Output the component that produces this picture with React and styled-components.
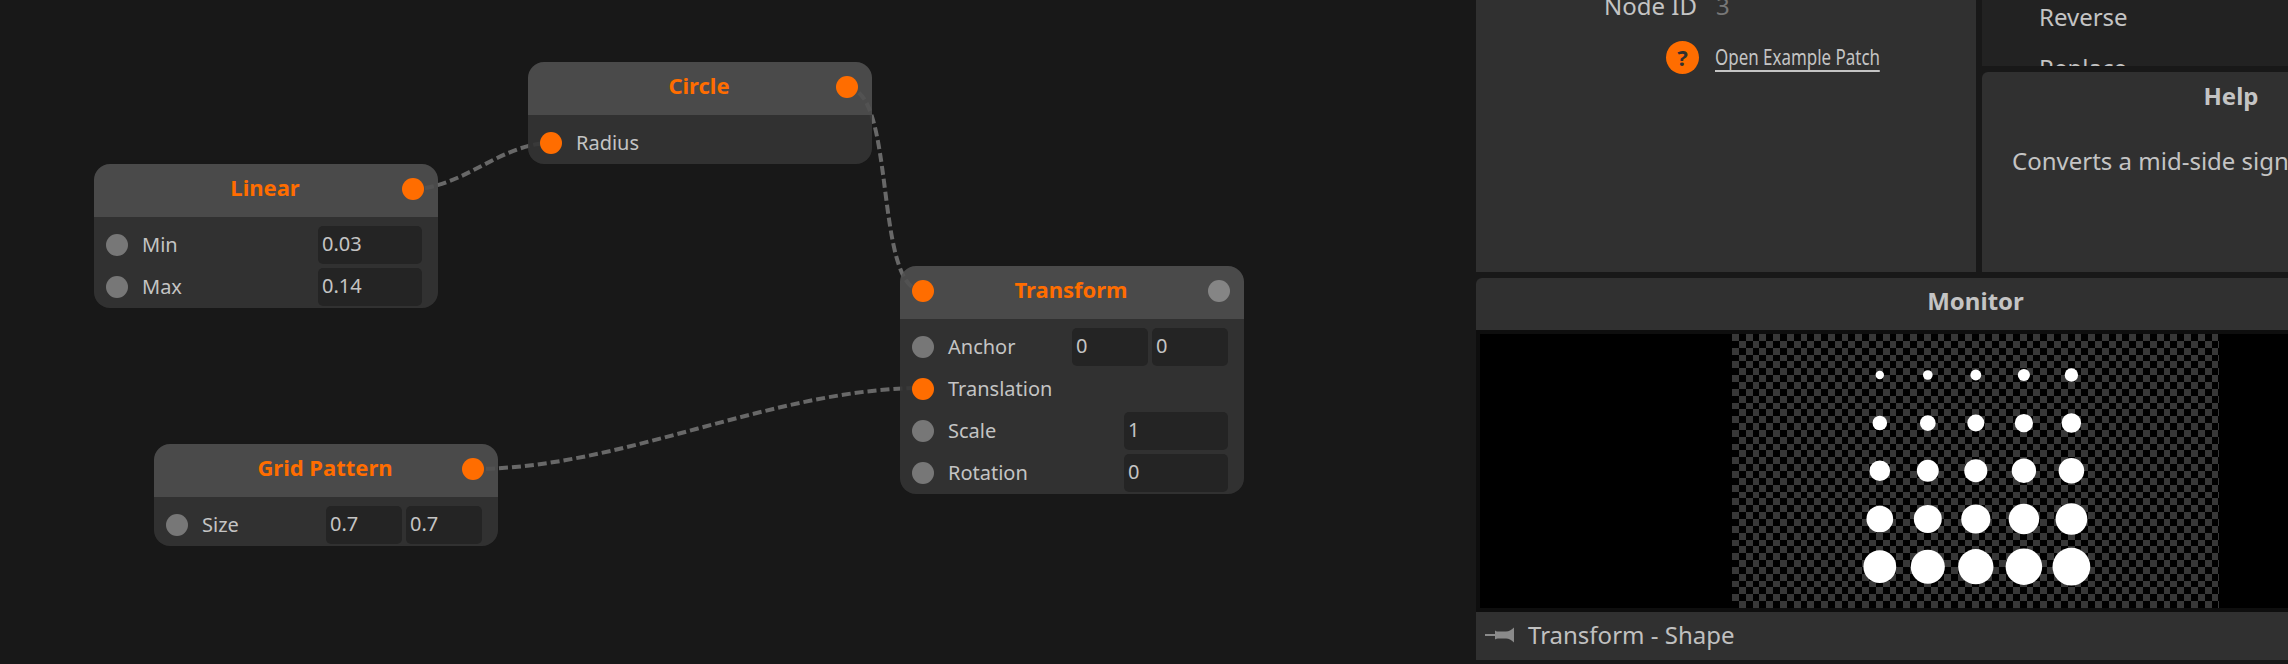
import React from "react"
import styled, { createGlobalStyle } from "styled-components"

const GlobalStyle = createGlobalStyle`
  html, body {
    margin: 0;
    padding: 0;
    background: #181818;
    font-family: "Noto Sans", "Open Sans", sans-serif;
    overflow: hidden;
  }
`

const Screen = styled.div`
  display: flex;
  width: 2288px;
  height: 664px;
  overflow: hidden;
  background: #181818;
`

const Canvas = styled.section`
  position: relative;
  flex: 0 0 1476px;
  height: 664px;
  overflow: hidden;
`

const WireLayer = styled.svg`
  position: absolute;
  inset: 0;
  pointer-events: none;
`

const Wire = styled.path`
  fill: none;
  stroke: #686868;
  stroke-width: 4;
  stroke-dasharray: 9 4;
`

const NodeCard = styled.div`
  position: absolute;
  left: ${(p) => p.$x}px;
  top: ${(p) => p.$y}px;
  width: 344px;
`

const NodeHeader = styled.header`
  display: grid;
  grid-template-columns: 1fr auto 1fr;
  align-items: center;
  box-sizing: border-box;
  height: 53px;
  padding: 0 14px 3px 12px;
  border-radius: 16px 16px 0 0;
  background: rgba(80, 80, 80, 0.9);
`

const NodeTitle = styled.h3`
  grid-column: 2;
  margin: -4px 0 0;
  font-size: 22px;
  font-weight: 700;
  color: #ff6d00;
  white-space: nowrap;
`

const Port = styled.span`
  flex: none;
  display: block;
  width: 22px;
  height: 22px;
  border-radius: 50%;
  background: ${(p) => (p.$on ? "#ff6d00" : p.$light ? "#858585" : "#777")};
`

const InPort = styled(Port)`
  grid-column: 1;
  grid-row: 1;
  justify-self: start;
`

const OutPort = styled(Port)`
  grid-column: 3;
  grid-row: 1;
  justify-self: end;
`

const NodeBody = styled.div`
  padding-top: 7px;
  border-radius: 0 0 16px 16px;
  background: rgba(52, 52, 52, 0.9);
`

const Row = styled.div`
  display: flex;
  align-items: center;
  gap: 4px;
  height: 42px;
  padding: 0 16px 0 12px;
`

const Label = styled.span`
  flex: 1;
  margin: -2px 0 0 10px;
  font-size: 20px;
  color: #c4c4c4;
  white-space: nowrap;
`

const Field = styled.div`
  flex: none;
  box-sizing: border-box;
  width: ${(p) => (p.$half ? 76 : 104)}px;
  height: 38px;
  padding-left: 4px;
  border-radius: 5px;
  background: #242424;
  font-size: 20px;
  line-height: 36px;
  color: #c4c4c4;
`

const Side = styled.aside`
  flex: none;
  display: grid;
  grid-template-columns: 500px 498px;
  grid-template-rows: 272px 382px;
  gap: 6px;
  width: 1004px;
  height: 664px;
`

const Panel = styled.div`
  background: #303030;
  overflow: hidden;
`

const Inspector = styled(Panel)`
  display: flex;
  flex-direction: column;
  color: #c4c4c4;
`

const InfoRow = styled.div`
  display: flex;
  align-items: center;
  gap: 19px;
  height: 40px;
  margin-top: -15px;
  padding-left: 128px;
  font-size: 24px;
`

const InfoValue = styled.span`
  color: #777;
`

const ExampleRow = styled.div`
  display: flex;
  align-items: center;
  gap: 16px;
  height: 40px;
  margin-top: 12px;
  padding-left: 190px;
`

const HelpIcon = styled.span`
  flex: none;
  width: 33px;
  height: 33px;
  border-radius: 50%;
  background: #ff6d00;
  color: #303030;
  font-size: 22px;
  font-weight: 700;
  line-height: 33px;
  text-align: center;
`

// the link is set narrower than the font's own width
const ExampleLink = styled.a`
  font-size: 22px;
  line-height: 27px;
  color: #c4c4c4;
  border-bottom: 2px solid #c4c4c4;
  white-space: nowrap;
  transform: scaleX(0.77);
  transform-origin: left center;
`

const RightStack = styled.div`
  display: flex;
  flex-direction: column;
  gap: 6px;
  height: 272px;
`

const ListPanel = styled.div`
  flex: 0 0 66px;
  overflow: hidden;
  background: #222;
`

const ListItem = styled.div`
  height: 51px;
  padding-left: 57px;
  font-size: 24px;
  line-height: 51px;
  color: #c4c4c4;

  &:first-child {
    margin-top: -9px;
  }
`

const HelpPanel = styled(Panel)`
  flex: 1;
  border-radius: 6px 6px 0 0;
`

const PanelTitle = styled.h2`
  margin: 0;
  height: 52px;
  font-size: 24px;
  font-weight: 700;
  line-height: ${(p) => p.$line || 48}px;
  text-align: center;
  color: #c4c4c4;
`

const HelpText = styled.p`
  margin: 19px 0 0;
  padding-left: 30px;
  font-size: 24px;
  line-height: 36px;
  color: #c4c4c4;
  white-space: nowrap;
`

const Monitor = styled(Panel)`
  grid-column: 1 / 3;
  display: flex;
  flex-direction: column;
  width: 999px;
  height: 382px;
  border-radius: 6px 6px 0 0;
`

const Viewport = styled.div`
  display: flex;
  justify-content: center;
  box-sizing: border-box;
  height: 282px;
  border: 4px solid #0e0e0e;
  background: #000;
`

const Preview = styled.svg`
  display: block;
  flex: none;
`

const MonitorFooter = styled.footer`
  display: flex;
  align-items: center;
  gap: 13px;
  flex: 1;
  padding: 0 0 3px 9px;
  font-size: 24px;
  color: #c0c0c0;
`

const pinPath =
  "M10 3.5C12 5 14 4.5 16 4.5H21C24 4.5 26 3 29 .5V15.5C26 13 24 11.5 21 11.5H16C14 11.5 12 11 10 12.5Z"

const PinIcon = () => (
  <svg width="30" height="16" viewBox="0 0 30 16">
    <path d="M0 8H11" stroke="#8a8a8a" strokeWidth="2" />
    <path d={pinPath} fill="#8a8a8a" />
  </svg>
)

const curve = (x1, y1, x2, y2, k) =>
  `M${x1} ${y1}C${x1 + k} ${y1} ${x2 - k} ${y2} ${x2} ${y2}`

const wires = [
  curve(412, 189, 551, 143, 50),
  curve(847, 88, 923, 291, 50),
  curve(473, 469, 923, 388, 150),
]

const cell = 6.85
const cells = []
for (let j = 0; j < 40; j++) {
  for (let i = 0; i < 72; i++) {
    if ((i + j) % 2 === 0) cells.push({ x: i * cell, y: j * cell })
  }
}

const dotXs = [147.8, 195.8, 243.8, 291.9, 339.4]
const dotYs = [41, 89, 136.7, 185, 232.7]

const dots = dotYs.flatMap((cy, row) =>
  dotXs.map((cx, col) => ({ cx, cy, r: (8.4 + 6.1 * row + 1.25 * col) / 2 }))
)

const GraphNode = ({ x, y, title, inOn, outOn, outLight, hasIn, children }) => (
  <NodeCard $x={x} $y={y}>
    <NodeHeader>
      {hasIn && <InPort $on={inOn} />}
      <NodeTitle>{title}</NodeTitle>
      <OutPort $on={outOn} $light={outLight} />
    </NodeHeader>
    <NodeBody>{children}</NodeBody>
  </NodeCard>
)

const Param = ({ label, on, values = [] }) => (
  <Row>
    <Port $on={on} />
    <Label>{label}</Label>
    {values.map((v, i) => (
      <Field key={i} $half={values.length > 1}>
        {v}
      </Field>
    ))}
  </Row>
)

const App = () => (
  <Screen>
    <GlobalStyle />
    <Canvas>
      <WireLayer width="1476" height="664">
        {wires.map((d) => (
          <Wire key={d} d={d} />
        ))}
      </WireLayer>
      <GraphNode x={528} y={62} title="Circle" outOn>
        <Param label="Radius" on />
      </GraphNode>
      <GraphNode x={94} y={164} title="Linear" outOn>
        <Param label="Min" values={["0.03"]} />
        <Param label="Max" values={["0.14"]} />
      </GraphNode>
      <GraphNode x={154} y={444} title="Grid Pattern" outOn>
        <Param label="Size" values={["0.7", "0.7"]} />
      </GraphNode>
      <GraphNode x={900} y={266} title="Transform" hasIn inOn outLight>
        <Param label="Anchor" values={["0", "0"]} />
        <Param label="Translation" on />
        <Param label="Scale" values={["1"]} />
        <Param label="Rotation" values={["0"]} />
      </GraphNode>
    </Canvas>
    <Side>
      <Inspector>
        <InfoRow>
          <span>Node ID</span>
          <InfoValue>3</InfoValue>
        </InfoRow>
        <ExampleRow>
          <HelpIcon>?</HelpIcon>
          <ExampleLink>Open Example Patch</ExampleLink>
        </ExampleRow>
      </Inspector>
      <RightStack>
        <ListPanel>
          <ListItem>Reverse</ListItem>
          <ListItem>Replace</ListItem>
        </ListPanel>
        <HelpPanel>
          <PanelTitle>Help</PanelTitle>
          <HelpText>Converts a mid-side signal to left-right.</HelpText>
        </HelpPanel>
      </RightStack>
      <Monitor>
        <PanelTitle $line={46}>Monitor</PanelTitle>
        <Viewport>
          <Preview width="487" height="274" viewBox="0 0 487 274">
            <g shapeRendering="crispEdges" fill="#383838">
              {cells.map((c) => (
                <rect key={`${c.x}-${c.y}`} x={c.x} y={c.y} width={cell} height={cell} />
              ))}
            </g>
            {dots.map((d, i) => (
              <circle key={i} cx={d.cx} cy={d.cy} r={d.r} fill="#fff" />
            ))}
          </Preview>
        </Viewport>
        <MonitorFooter>
          <PinIcon />
          <span>Transform - Shape</span>
        </MonitorFooter>
      </Monitor>
    </Side>
  </Screen>
)

export default App
